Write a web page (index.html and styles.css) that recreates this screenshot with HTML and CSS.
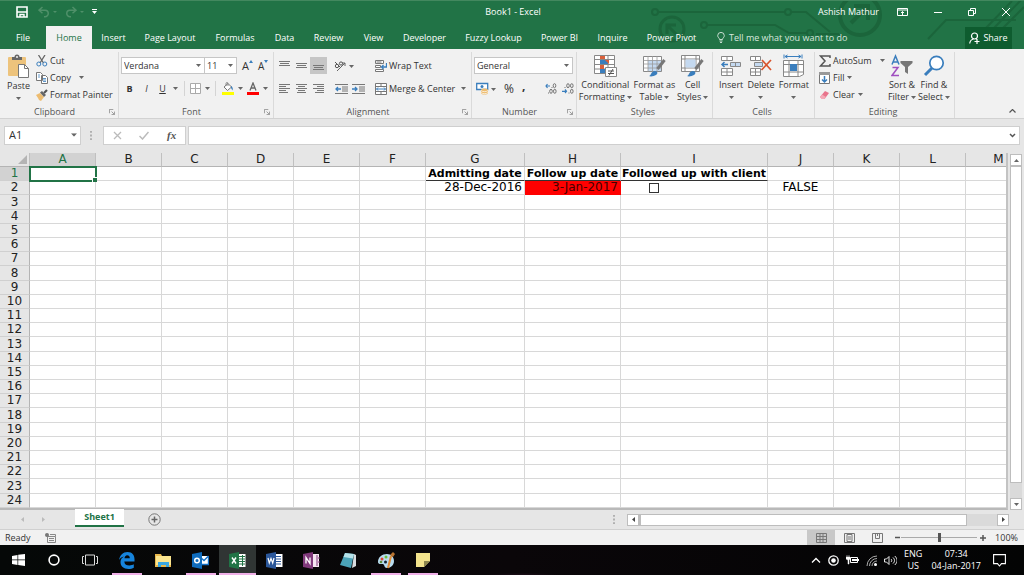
FILE: index.html
```html
<!DOCTYPE html>
<html lang="en">
<head>
<meta charset="utf-8">
<title>Book1 - Excel</title>
<link rel="stylesheet" href="styles.css">
</head>
<body>
<svg class="defs" aria-hidden="true">
  <symbol id="caret" viewBox="0 0 5 3"><path d="M0 0h5L2.5 3z" fill="#666"/></symbol>
  <symbol id="launch" viewBox="0 0 7 7"><path d="M.5 5V.5H5M3 3l3 3M6.5 3v3.5H3" fill="none" stroke="#777" stroke-width=".8"/></symbol>
  <symbol id="dots" viewBox="0 0 2 10"><path d="M0 0h2v2H0zM0 4h2v2H0zM0 8h2v2H0z" fill="#aaa"/></symbol>
</svg>

<header class="top">
  <svg class="circuit" width="380" height="49" viewBox="644 0 380 49" aria-hidden="true">
    <g fill="none" stroke="#1b653b" stroke-width="2">
      <circle cx="655" cy="11" r="3"/><path d="M658 11h127M791 11h15l24 20M707 24h68l14 8h18M816 33h22l6 5M928 38l18-19h70"/>
      <circle cx="788" cy="11" r="3"/><circle cx="704" cy="24" r="3"/><circle cx="810" cy="32" r="3"/>
      <circle cx="672" cy="28" r="12" stroke-width="3"/><path d="M667 33v-9h9M667 24l10 10" stroke-width="3"/>
      <circle cx="860" cy="14" r="20" stroke-width="4"/><path d="M851 22l15-15M854 5h14v14" stroke-width="4"/>
      <path d="M986 27l26-27M994 27l28-29M1003 27l21-21"/>
    </g>
  </svg>
  <div class="title">
    <div class="quick">
      <button aria-label="Save"><svg width="12" height="12" viewBox="0 0 12 12"><path d="M1 1h10v10H1z" fill="none" stroke="#fff" stroke-width="1.6"/><path d="M1 6h10M4 11V8.5h4V11" fill="none" stroke="#fff" stroke-width="1.4"/></svg></button>
      <button aria-label="Undo"><svg width="20" height="12" viewBox="0 0 20 12"><path d="M4.500 1L1 4.200l3.500 3M1.500 4.200H7a3.200 3.200 0 0 1 0 6.500H6" fill="none" stroke="#4f9069" stroke-width="1.500"/><path d="M15 5h4l-2 2z" fill="#4f9069"/></svg></button>
      <button aria-label="Redo"><svg width="20" height="12" viewBox="0 0 20 12"><path d="M7.500 1L11 4.200l-3.500 3M10.500 4.200H5a3.200 3.200 0 0 0 0 6.500h1" fill="none" stroke="#4f9069" stroke-width="1.500"/><path d="M15 5h4l-2 2z" fill="#4f9069"/></svg></button>
      <button aria-label="Customize toolbar"><svg width="5" height="6" viewBox="0 0 5 6"><path d="M0 0h5v1H0zM0 2h5L2.500 5z" fill="#fff"/></svg></button>
    </div>
    <h1>Book1 - Excel</h1>
    <div class="window">
      <span class="user">Ashish Mathur</span>
      <button aria-label="Ribbon display options"><svg width="11" height="8" viewBox="0 0 11 8"><path d="M.5.5h10v7H.5zM.5 2h10M5.500 7V3.500M4 5l1.500-1.500L7 5" fill="none" stroke="#fff"/></svg></button>
      <button aria-label="Minimize"><svg width="8" height="8" viewBox="0 0 8 8"><path d="M0 4.500h8" stroke="#fff"/></svg></button>
      <button aria-label="Restore"><svg width="8" height="8" viewBox="0 0 8 8"><path d="M.5 2.500h5v5h-5zM2.500 2V.5h5v5H6" fill="none" stroke="#fff"/></svg></button>
      <button aria-label="Close"><svg width="8" height="8" viewBox="0 0 8 8"><path d="M0 0l8 8M8 0L0 8" stroke="#fff"/></svg></button>
    </div>
  </div>
  <div class="tabrow">
    <nav class="tabs">
      <button>File</button><button class="active">Home</button><button>Insert</button><button>Page Layout</button><button>Formulas</button><button>Data</button><button>Review</button><button>View</button><button>Developer</button><button>Fuzzy Lookup</button><button>Power BI</button><button>Inquire</button><button>Power Pivot</button>
    </nav>
    <button class="tell"><svg width="8" height="11" viewBox="0 0 8 11"><path d="M2.500 7.500C2.500 6 .7 5.500.7 3.700a3.200 3.200 0 0 1 6.600 0C7.300 5.500 5.500 6 5.500 7.500zM2.500 9h3M3 10.500h2" fill="none" stroke="#d8e8df" stroke-width=".9"/></svg>Tell me what you want to do</button>
    <button class="share"><svg width="11" height="12" viewBox="0 0 11 12"><circle cx="5.500" cy="4" r="3" fill="none" stroke="#fff" stroke-width="1.200"/><path d="M.7 11.500C1 9 2.500 7.500 4.500 7M7 6.500l1 1M5.500 9.500h5M8 7v5" fill="none" stroke="#fff" stroke-width="1.200"/></svg>Share</button>
  </div>
</header>

<section class="ribbon" aria-label="Home ribbon">
  <div class="group clipboard">
    <div class="body">
      <button class="big"><svg width="23" height="25" viewBox="0 0 23 25"><rect x="1" y="3" width="18" height="19" rx="1" fill="#edc37c"/><path d="M5 6V3h2.500a2.500 2.500 0 0 1 5 0H15v3z" fill="#666"/><circle cx="10" cy="3" r="1" fill="#f1f1f1"/><path d="M11.500 10.500h6l4 4v9h-10z" fill="#fff" stroke="#777"/><path d="M17.500 10.500v4h4" fill="none" stroke="#777"/></svg>Paste<svg class="c" width="5" height="3"><use href="#caret"/></svg></button>
      <div class="stack">
        <button><svg width="12" height="12" viewBox="0 0 12 12"><path d="M2.500 0l5 8M9 0L4 8" stroke="#666" stroke-width="1.300"/><circle cx="2.800" cy="9" r="2" fill="none" stroke="#3a7ebd"/><circle cx="8.800" cy="9" r="2" fill="none" stroke="#3a7ebd"/></svg>Cut</button>
        <button><svg width="12" height="12" viewBox="0 0 12 12"><path d="M.5.500h4l2 2v6h-6zM5.500 3.500h4l2 2v6h-6z" fill="#fff" stroke="#777"/><path d="M2 3h2M2 5h2M7 6.500h3M7 8h3M7 9.500h3" stroke="#3a7ebd" stroke-width=".8"/></svg>Copy<svg class="c far" width="5" height="3"><use href="#caret"/></svg></button>
        <button><svg width="12" height="12" viewBox="0 0 12 12"><path d="M0 6l4-2 4 4-3 4-2-1-1-2z" fill="#edbc70"/><path d="M4 3.500L6 2l4 4-2 2z" fill="#666"/><path d="M8 4l3-3" stroke="#555" stroke-width="2.200"/></svg>Format Painter</button>
      </div>
    </div>
    <footer><span>Clipboard</span><svg width="6" height="6"><use href="#launch" width="6" height="6"/></svg></footer>
  </div>

  <div class="group font">
    <div class="rows">
      <div class="line">
        <label class="drop name"><select aria-label="Font"><option>Verdana</option></select><svg width="5" height="3"><use href="#caret"/></svg></label><label class="drop size"><select aria-label="Font size"><option>11</option></select><svg width="5" height="3"><use href="#caret"/></svg></label>
        <button class="grow"><b>A</b><svg width="4" height="3" viewBox="0 0 4 3"><path d="M0 3h4L2 0z" fill="#3a7ebd"/></svg></button>
        <button class="shrink"><b>A</b><svg width="4" height="3" viewBox="0 0 4 3"><path d="M0 0h4L2 3z" fill="#3a7ebd"/></svg></button>
      </div>
      <div class="line fmt">
        <button><b>B</b></button><button><i>I</i></button><button><u>U</u></button><button aria-label="Underline options"><svg width="5" height="3"><use href="#caret"/></svg></button>
        <span class="rule"></span>
        <button aria-label="Borders"><svg width="11" height="11" viewBox="0 0 11 11"><path d="M.5.500h10v10H.5zM5.500.500v10M.5 5.500h10" fill="#fff" stroke="#aaa"/></svg></button><button aria-label="Border options"><svg width="5" height="3"><use href="#caret"/></svg></button>
        <span class="rule"></span>
        <button aria-label="Fill color"><svg width="12" height="13" viewBox="0 0 12 13"><path d="M2 5l4-3.500L9.500 5 5.500 8.500z" fill="#fff" stroke="#777"/><path d="M4 4V1.500a1 1 0 0 1 2 0V4" fill="none" stroke="#777" stroke-width=".8"/><path d="M9 4c2 1 2 3 1.500 4.500L9 6z" fill="#3a7ebd"/><path d="M0 10h12v3H0z" fill="#ff0"/></svg></button><button aria-label="Fill options"><svg width="5" height="3"><use href="#caret"/></svg></button>
        <button aria-label="Font color"><svg width="12" height="13" viewBox="0 0 12 13"><path d="M3 8.500L6 1l3 7.500M4 6h4" fill="none" stroke="#666" stroke-width="1.300"/><path d="M0 10h12v3H0z" fill="#f00"/></svg></button><button aria-label="Font color options"><svg width="5" height="3"><use href="#caret"/></svg></button>
      </div>
    </div>
    <footer><span>Font</span><svg width="6" height="6"><use href="#launch" width="6" height="6"/></svg></footer>
  </div>

  <div class="group align">
    <div class="body">
      <div class="alignicons">
        <button aria-label="Top align"><svg width="11" height="11" viewBox="0 0 11 11"><path d="M0 1.500h11M1 3.500h9M0 5.500h11" stroke="#777"/></svg></button>
        <button aria-label="Middle align"><svg width="11" height="11" viewBox="0 0 11 11"><path d="M0 3.500h11M1 5.500h9M0 7.500h11" stroke="#777"/></svg></button>
        <button class="on" aria-label="Bottom align"><svg width="11" height="11" viewBox="0 0 11 11"><path d="M0 5.500h11M1 7.500h9M0 9.500h11" stroke="#777"/></svg></button>
        <button class="turn" aria-label="Orientation"><svg width="20" height="12" viewBox="0 0 20 12"><path d="M3 11l8-8M8 3h3v3" fill="none" stroke="#666"/><path d="M1 2l5 5" stroke="#555"/><circle cx="3" cy="6" r="1.700" fill="none" stroke="#555"/><circle cx="7" cy="3.500" r="1.600" fill="none" stroke="#555"/><path d="M15 5h5l-2.500 3z" fill="#666"/></svg></button>
        <button aria-label="Align left"><svg width="11" height="9" viewBox="0 0 11 9"><path d="M0 .500h11M0 2.500h7M0 4.500h11M0 6.500h7M0 8.500h9" stroke="#777"/></svg></button>
        <button aria-label="Center"><svg width="11" height="9" viewBox="0 0 11 9"><path d="M0 .500h11M2 2.500h7M0 4.500h11M2 6.500h7M1 8.500h9" stroke="#777"/></svg></button>
        <button aria-label="Align right"><svg width="11" height="9" viewBox="0 0 11 9"><path d="M0 .500h11M4 2.500h7M0 4.500h11M4 6.500h7M2 8.500h9" stroke="#777"/></svg></button>
        <span class="pair"><button aria-label="Decrease indent"><svg width="13" height="10" viewBox="0 0 13 10"><path d="M0 .500h13M7 3h6M7 5h6M7 7h6M0 9.500h13" stroke="#777"/><path d="M6 5H1M3 3L1 5l2 2" fill="none" stroke="#3a7ebd" stroke-width="1.300"/></svg></button>
        <button aria-label="Increase indent"><svg width="13" height="10" viewBox="0 0 13 10"><path d="M0 .500h13M7 3h6M7 5h6M7 7h6M0 9.500h13" stroke="#777"/><path d="M0 5h5M3 3l2 2-2 2" fill="none" stroke="#3a7ebd" stroke-width="1.300"/></svg></button></span>
      </div>
      <div class="alignwords">
        <button><svg width="12" height="12" viewBox="0 0 12 12"><path d="M.5.500h8v3h-8z" fill="#fff" stroke="#777"/><path d="M.5 5.500h5v2h-5zM.5 9.500h8v2h-8z" fill="#fff" stroke="#777"/><path d="M1.500 2h5" stroke="#777"/><path d="M11.500 3v4H6.500M8.500 5l-2 2 2 2" fill="none" stroke="#3a7ebd" stroke-width="1.300"/></svg>Wrap Text</button>
        <button><svg width="12" height="12" viewBox="0 0 12 12"><path d="M.5.500h11v11H.5zM.5 3.500h11M.5 8.500h11M6 0v3.500M6 8.500V12" fill="#fff" stroke="#777"/><path d="M1.500 6h9M3 4.500L1.500 6 3 7.500M9 4.500L10.500 6 9 7.500" fill="none" stroke="#3a7ebd"/></svg>Merge &amp; Center<svg class="c far" width="5" height="3"><use href="#caret"/></svg></button>
      </div>
    </div>
    <footer><span>Alignment</span><svg width="6" height="6"><use href="#launch" width="6" height="6"/></svg></footer>
  </div>

  <div class="group number">
    <div class="rows">
      <div class="line"><label class="drop wide"><select aria-label="Number format"><option>General</option></select><svg width="5" height="3"><use href="#caret"/></svg></label></div>
      <div class="line nums">
        <button aria-label="Accounting format"><svg width="20" height="13" viewBox="0 0 20 13"><path d="M.7 1.500h11v6H.7z" fill="#fff" stroke="#3a7ebd" stroke-width="1.300"/><circle cx="6" cy="4.500" r="1.500" fill="#3a7ebd"/><path d="M5 8c0-2 7-2 7 0v3c0 2-7 2-7 0z" fill="#edbc70"/><path d="M5 8.500c1 1.500 6 1.500 7 0M5 10.500c1 1.500 6 1.500 7 0" fill="none" stroke="#fff" stroke-width=".7"/><path d="M15 6h5l-2.500 3z" fill="#666"/></svg></button>
        <button class="pct">%</button><button class="pct comma"><b>,</b></button>
        <span class="rule"></span>
        <button class="dec" aria-label="Increase decimal"><svg width="12" height="11" viewBox="0 0 12 11"><path d="M5 3H1M2.500 1L1 3l1.500 2" fill="none" stroke="#3a7ebd" stroke-width="1.200"/><g fill="none" stroke="#666" stroke-width=".9"><ellipse cx="9.500" cy="2.700" rx="1.300" ry="2"/><ellipse cx="6" cy="8.300" rx="1.300" ry="2"/><ellipse cx="9.800" cy="8.300" rx="1.300" ry="2"/><path d="M6.500 4.500h1M3 10h1"/></g></svg></button>
        <button class="dec" aria-label="Decrease decimal"><svg width="12" height="11" viewBox="0 0 12 11"><path d="M0 8.300h4.500M3 6.500l1.500 1.800L3 10" fill="none" stroke="#3a7ebd" stroke-width="1.200"/><g fill="none" stroke="#666" stroke-width=".9"><ellipse cx="6" cy="2.700" rx="1.300" ry="2"/><ellipse cx="9.800" cy="2.700" rx="1.300" ry="2"/><ellipse cx="9.800" cy="8.300" rx="1.300" ry="2"/><path d="M2.500 4.500h1M6.500 10h1"/></g></svg></button>
      </div>
    </div>
    <footer><span>Number</span><svg width="6" height="6"><use href="#launch" width="6" height="6"/></svg></footer>
  </div>

  <div class="group styles">
    <div class="body">
      <button class="big"><svg width="23" height="24" viewBox="0 0 23 24"><path d="M.5 1.500h20v18H.5zM.5 5.500h20M.5 10.500h20M.5 15h20M7 1v19M14 1v19" fill="#fff" stroke="#888"/><path d="M6 2h5v3H6zM6 11h4v4H6z" fill="#d9603b"/><path d="M6 6h8v4H6zM6 15h6v4H6z" fill="#3a7ebd"/><path d="M11 6h4v4" fill="#d9603b"/><path d="M11.500 13.500h11v9h-11z" fill="#fff" stroke="#888"/><path d="M14 17h6M14 19.500h6M19 15l-4 6.500" stroke="#555"/></svg>Conditional<span>Formatting<svg class="c" width="5" height="3"><use href="#caret"/></svg></span></button>
      <button class="big"><svg width="23" height="24" viewBox="0 0 23 24"><path d="M.5 2.500h18v15H.5z" fill="#fff" stroke="#888"/><path d="M5 6h13v11H5z" fill="#c4d9f0"/><path d="M.5 6.500h18M.5 10h18M.5 14h18M5 2v16M9.500 2v16M14 2v16" fill="none" stroke="#999" stroke-width=".8"/><path d="M21.500 6l-7 9" stroke="#777" stroke-width="3"/><path d="M6 22c2 0 2-5 6-5 3 0 3 3 1 4s-5 2-7 1z" fill="#3a7ebd"/></svg>Format as<span>Table<svg class="c" width="5" height="3"><use href="#caret"/></svg></span></button>
      <button class="big"><svg width="23" height="24" viewBox="0 0 23 24"><path d="M.5 1.500h18v16H.5zM.5 5h18M.5 14h18M4 1v17M15 1v17" fill="#fff" stroke="#888"/><path d="M4.500 5.500h10v8h-10z" fill="#c4d9f0"/><path d="M21.500 6l-7 9" stroke="#777" stroke-width="3"/><path d="M6 22c2 0 2-5 6-5 3 0 3 3 1 4s-5 2-7 1z" fill="#3a7ebd"/></svg>Cell<span>Styles<svg class="c" width="5" height="3"><use href="#caret"/></svg></span></button>
    </div>
    <footer><span>Styles</span></footer>
  </div>

  <div class="group cells">
    <div class="body">
      <button class="big"><svg width="22" height="24" viewBox="0 0 22 24"><path d="M1.500 2.500h11v4h-11zM7 2.500v4M1.500 14.500h11v7h-11zM7 14.500v7M1.500 18h11" fill="#fff" stroke="#888"/><path d="M10.500 8.500h10v4h-10z" fill="#c4d9f0" stroke="#888"/><path d="M15.500 8.500v4" stroke="#888"/><path d="M8 10.500H2M4.500 8L2 10.500 4.500 13" fill="none" stroke="#3a7ebd" stroke-width="1.500"/></svg>Insert<svg class="c" width="5" height="3"><use href="#caret"/></svg></button>
      <button class="big"><svg width="22" height="24" viewBox="0 0 22 24"><path d="M.5 2.500h10v4H.5zM5.500 2.500v4M.5 14.500h10v7H.5zM5.500 14.500v7M.5 18h10" fill="#fff" stroke="#888"/><path d="M4.500 8.500h8v4h-8z" fill="#c4d9f0" stroke="#888"/><path d="M12 6l9 10M21 6L11.500 16" stroke="#d9532c" stroke-width="1.700"/></svg>Delete<svg class="c" width="5" height="3"><use href="#caret"/></svg></button>
      <button class="big"><svg width="22" height="24" viewBox="0 0 22 24"><path d="M1 .500v4M19 .500v4M2 2.500h16M4.500 1L2 2.500 4.500 4M15.500 1L18 2.500 15.500 4" fill="none" stroke="#3a7ebd"/><path d="M.5 6.500h20v14l-4 2H.5zM.5 10.500h20M.5 18h20M6 6v16M15 6v16" fill="#fff" stroke="#888"/><path d="M7 10h7v7H7z" fill="#3a7ebd"/></svg>Format<svg class="c" width="5" height="3"><use href="#caret"/></svg></button>
    </div>
    <footer><span>Cells</span></footer>
  </div>

  <div class="group edit">
    <div class="body">
      <div class="stack">
        <button><svg width="12" height="12" viewBox="0 0 12 12"><path d="M11 3V1H1.500L6 6l-4.500 5H11V9" fill="none" stroke="#555" stroke-width="1.500"/></svg>AutoSum<svg class="c far" width="5" height="3"><use href="#caret"/></svg></button>
        <button><svg width="12" height="12" viewBox="0 0 12 12"><path d="M.5.500h10v11H.5z" fill="#fff" stroke="#777"/><path d="M0 0h11v3H0z" fill="#999"/><path d="M5.500 4v6M3 7.500L5.500 10 8 7.500" fill="none" stroke="#3a7ebd" stroke-width="1.500"/></svg>Fill<svg class="c" width="5" height="3"><use href="#caret"/></svg></button>
        <button><svg width="12" height="12" viewBox="0 0 12 12"><path d="M1 8l5-6 4 2-4.500 6H3z" fill="#e8748c"/><path d="M1 8l2-2.500L7 8l-1.500 2H3z" fill="#f4a9b7"/></svg>Clear<svg class="c" width="5" height="3"><use href="#caret"/></svg></button>
      </div>
      <button class="big"><svg width="22" height="24" viewBox="0 0 22 24"><path d="M1 10.500L4.500 2 8 10.500M2.500 8h4" fill="none" stroke="#3a7ebd" stroke-width="1.500"/><path d="M1.500 13.500h5.500l-6 8h7" fill="none" stroke="#a04fc0" stroke-width="1.500"/><path d="M9.500 7h12v2L17 13v7l-3-2v-5L9.500 9z" fill="#777"/></svg>Sort &amp;<span>Filter<svg class="c" width="5" height="3"><use href="#caret"/></svg></span></button>
      <button class="big"><svg width="22" height="24" viewBox="0 0 22 24"><circle cx="13.500" cy="9" r="6.700" fill="#fff" stroke="#3a7ebd" stroke-width="1.700"/><path d="M9 14l-7 7" stroke="#3a7ebd" stroke-width="3"/></svg>Find &amp;<span>Select<svg class="c" width="5" height="3"><use href="#caret"/></svg></span></button>
    </div>
    <footer><span>Editing</span></footer>
  </div>
  <button class="collapse" aria-label="Collapse ribbon"><svg width="7" height="4" viewBox="0 0 7 4"><path d="M.5 3.500l3-3 3 3" fill="none" stroke="#555" stroke-width="1.200"/></svg></button>
</section>

<section class="formula">
  <label class="drop cellname"><input aria-label="Name box" value="A1"><svg width="6" height="4" viewBox="0 0 5 3"><use href="#caret"/></svg></label>
  <svg class="grip" width="2" height="9" viewBox="0 0 2 10"><use href="#dots"/></svg>
  <div class="fx">
    <button aria-label="Cancel"><svg width="9" height="9" viewBox="0 0 9 9"><path d="M1 1l7 7M8 1L1 8" stroke="#bbb" stroke-width="1.300"/></svg></button>
    <button aria-label="Enter"><svg width="10" height="9" viewBox="0 0 10 9"><path d="M.5 5L3.500 8l6-7" fill="none" stroke="#bbb" stroke-width="1.500"/></svg></button>
    <button class="fn"><i>fx</i></button>
  </div>
  <label class="drop bar"><input aria-label="Formula bar"><svg width="7" height="5" viewBox="0 0 7 5"><path d="M1 1l2.500 2.500L6 1" fill="none" stroke="#555" stroke-width="1.500"/></svg></label>
</section>

<main class="work">
  <div class="sheet">
    <table>
      <colgroup><col class="w-head"><col span="6" class="w-std"><col class="w-g"><col class="w-h"><col class="w-i"><col span="4" class="w-std"></colgroup>
      <thead><tr><th class="corner"><svg width="9" height="9" viewBox="0 0 9 9"><path d="M9 0v9H0z" fill="#b4b4b4"/></svg></th><th class="sel">A</th><th>B</th><th>C</th><th>D</th><th>E</th><th>F</th><th>G</th><th>H</th><th>I</th><th>J</th><th>K</th><th>L</th><th>M</th></tr></thead>
      <tbody>
        <tr><th class="sel">1<td class="cursor"><td><td><td><td><td><td class="cap">Admitting date<td class="cap">Follow up date<td class="cap">Followed up with client<td><td><td><td>
        <tr><th>2<td><td><td><td><td><td><td class="date">28-Dec-2016<td class="date due">3-Jan-2017<td class="tick"><input type="checkbox" aria-label="Followed up with client"><td class="mid">FALSE<td><td><td>
        <tr><th>3<td><td><td><td><td><td><td><td><td><td><td><td><td>
        <tr><th>4<td><td><td><td><td><td><td><td><td><td><td><td><td>
        <tr><th>5<td><td><td><td><td><td><td><td><td><td><td><td><td>
        <tr><th>6<td><td><td><td><td><td><td><td><td><td><td><td><td>
        <tr><th>7<td><td><td><td><td><td><td><td><td><td><td><td><td>
        <tr><th>8<td><td><td><td><td><td><td><td><td><td><td><td><td>
        <tr><th>9<td><td><td><td><td><td><td><td><td><td><td><td><td>
        <tr><th>10<td><td><td><td><td><td><td><td><td><td><td><td><td>
        <tr><th>11<td><td><td><td><td><td><td><td><td><td><td><td><td>
        <tr><th>12<td><td><td><td><td><td><td><td><td><td><td><td><td>
        <tr><th>13<td><td><td><td><td><td><td><td><td><td><td><td><td>
        <tr><th>14<td><td><td><td><td><td><td><td><td><td><td><td><td>
        <tr><th>15<td><td><td><td><td><td><td><td><td><td><td><td><td>
        <tr><th>16<td><td><td><td><td><td><td><td><td><td><td><td><td>
        <tr><th>17<td><td><td><td><td><td><td><td><td><td><td><td><td>
        <tr><th>18<td><td><td><td><td><td><td><td><td><td><td><td><td>
        <tr><th>19<td><td><td><td><td><td><td><td><td><td><td><td><td>
        <tr><th>20<td><td><td><td><td><td><td><td><td><td><td><td><td>
        <tr><th>21<td><td><td><td><td><td><td><td><td><td><td><td><td>
        <tr><th>22<td><td><td><td><td><td><td><td><td><td><td><td><td>
        <tr><th>23<td><td><td><td><td><td><td><td><td><td><td><td><td>
        <tr><th>24<td><td><td><td><td><td><td><td><td><td><td><td><td>
      </tbody>
    </table>
  </div>
  <div class="vscroll">
    <button aria-label="Scroll up"><svg width="5" height="3" viewBox="0 0 5 3"><path d="M0 3h5L2.500 0z" fill="#666"/></svg></button>
    <div class="thumb"></div><div class="track"></div>
    <button aria-label="Scroll down"><svg width="5" height="3"><use href="#caret"/></svg></button>
  </div>
</main>

<section class="sheets">
  <button class="step" aria-label="Previous sheet"><svg width="3" height="5" viewBox="0 0 3 5"><path d="M3 0v5L0 2.500z" fill="#bbb"/></svg></button>
  <button class="step" aria-label="Next sheet"><svg width="3" height="5" viewBox="0 0 3 5"><path d="M0 0v5l3-2.500z" fill="#bbb"/></svg></button>
  <button class="sheettab">Sheet1</button>
  <button class="add" aria-label="New sheet"><svg width="13" height="13" viewBox="0 0 13 13"><circle cx="6.500" cy="6.500" r="5.700" fill="none" stroke="#777"/><path d="M6.500 3.500v6M3.500 6.500h6" stroke="#666" stroke-width="1.500"/></svg></button>
  <svg class="grip" width="2" height="9" viewBox="0 0 2 10"><use href="#dots"/></svg>
  <div class="hscroll">
    <button aria-label="Scroll left"><svg width="3" height="5" viewBox="0 0 3 5"><path d="M3 0v5L0 2.500z" fill="#444"/></svg></button>
    <div class="thumb"></div><div class="track"></div>
    <button aria-label="Scroll right"><svg width="3" height="5" viewBox="0 0 3 5"><path d="M0 0v5l3-2.500z" fill="#444"/></svg></button>
  </div>
</section>

<section class="status">
  <span>Ready</span>
  <svg class="macro" width="11" height="10" viewBox="0 0 11 10"><path d="M2.500 3.500h8v6h-8zM5 1.500h5.500v2M4 5.500h5M4 7.500h5" fill="none" stroke="#888"/><circle cx="2" cy="2" r="2" fill="#777"/></svg>
  <button class="view on" aria-label="Normal view"><svg width="11" height="10" viewBox="0 0 11 10"><path d="M.5.500h10v9H.5zM.5 3.500h10M.5 6.500h10M4 0v10M7 0v10" fill="none" stroke="#777"/></svg></button>
  <button class="view" aria-label="Page layout view"><svg width="11" height="10" viewBox="0 0 11 10"><path d="M.5.500h10v9H.5zM3 1.500h5v7H3zM4 4h3M4 6h3" fill="none" stroke="#777"/></svg></button>
  <button class="view" aria-label="Page break view"><svg width="11" height="10" viewBox="0 0 11 10"><path d="M.5.500h10v9H.5zM3.500 0v5.500h4V0M5.500 0v3" fill="none" stroke="#777"/></svg></button>
  <button class="zoom" aria-label="Zoom out"><svg width="5" height="5" viewBox="0 0 5 5"><path d="M0 2.500h5" stroke="#555" stroke-width="1.500"/></svg></button>
  <input type="range" aria-label="Zoom" min="0" max="100" value="50">
  <button class="zoom" aria-label="Zoom in"><svg width="6" height="6" viewBox="0 0 6 6"><path d="M0 3h6M3 0v6" stroke="#555" stroke-width="1.500"/></svg></button>
  <span class="percent">100%</span>
</section>

<footer class="taskbar">
  <div class="apps">
    <button aria-label="Start"><svg width="13" height="12" viewBox="0 0 13 12"><path d="M0 2l5.500-1v4.600H0zM6.200.8L13 0v5.600H6.200zM0 6.300h5.500V11L0 10zM6.200 6.300H13V12l-6.800-.9z" fill="#fff"/></svg></button>
    <button aria-label="Cortana"><svg width="12" height="12" viewBox="0 0 12 12"><circle cx="6" cy="6" r="4.900" fill="none" stroke="#fff" stroke-width="1.600"/></svg></button>
    <button aria-label="Task view"><svg width="16" height="12" viewBox="0 0 16 12"><path d="M3.500 1h9v10h-9zM2 2.500H.5v7H2M14 2.500h1.500v7H14" fill="none" stroke="#ddd"/></svg></button>
    <button class="run" aria-label="Edge"><svg width="16" height="17" viewBox="0 0 16 17"><path d="M0 8C1 3 4 0 8.500 0c5 0 7 3.500 7 7v2.500H5.300c.2 3 2.400 4 5 4 2 0 3.500-.5 4.500-1.200v3.400C13.500 16.500 11.500 17 9.500 17 4.500 17 1.300 14 1.500 9.800 1.700 7.500 3 5.600 5 4.600 2.600 5 1 6.300 0 8zm5.500-1.700h5.300c0-2-1-3.100-2.600-3.100S5.700 4.500 5.500 6.300z" fill="#1684dc"/></svg></button>
    <button aria-label="File Explorer"><svg width="17" height="15" viewBox="0 0 17 15"><path d="M0 1h6l1 2h9v11H0z" fill="#e8b84c"/><path d="M1 3h15v9H1z" fill="#fbe58f"/><path d="M3 9h11v5h-3v-2H6v2H3z" fill="#3aa7e0"/></svg></button>
    <button class="run" aria-label="Outlook"><svg width="17" height="17" viewBox="0 0 17 17"><path d="M8 4h8.500v9H8z" fill="#fff"/><path d="M8 5l4 3.500L16.500 4M8 12.500h8.500V4" fill="none" stroke="#1670c4" stroke-width="1.400"/><path d="M0 2l10-2v17L0 15z" fill="#0f6cbd"/><circle cx="5" cy="8.500" r="2.300" fill="none" stroke="#fff" stroke-width="1.500"/></svg></button>
    <button class="run now" aria-label="Excel"><svg width="17" height="17" viewBox="0 0 17 17"><path d="M8 2h8.500v13H8z" fill="#fff"/><path d="M10 4.500h6M10 7h6M10 9.500h6M10 12h6M13.500 3v11" stroke="#217346"/><path d="M0 2l10-2v17L0 15z" fill="#217346"/><path d="M3 5.500l4 6M7 5.500l-4 6" stroke="#fff" stroke-width="1.400"/></svg></button>
    <button aria-label="Word"><svg width="17" height="17" viewBox="0 0 17 17"><path d="M8 2h8.500v13H8z" fill="#fff"/><path d="M10 4.500h5M10 7h5M10 9.500h5M10 12h5" stroke="#2b579a"/><path d="M0 2l10-2v17L0 15z" fill="#2b579a"/><path d="M2 6l1.300 5L5 6.500 6.700 11 8 6" fill="none" stroke="#fff" stroke-width="1.200"/></svg></button>
    <button aria-label="OneNote"><svg width="17" height="17" viewBox="0 0 17 17"><path d="M8 2h8v13H8z" fill="#f6e6f2"/><path d="M14 3v11M16 5v2M16 9v2" stroke="#80397b"/><path d="M0 2l10-2v17L0 15z" fill="#80397b"/><path d="M3 11.500v-6l4 6v-6" fill="none" stroke="#fff" stroke-width="1.300"/></svg></button>
    <button aria-label="Notepad"><svg width="17" height="17" viewBox="0 0 17 17"><path d="M14 2l2 1v11l-4 2z" fill="#d8dde0"/><path d="M5 1l9 1-3 14-11-3z" fill="#4ba3b8"/><path d="M5 1l9 1-1 4.500-9.500-1.500z" fill="#b5e2ea"/></svg></button>
    <button class="run" aria-label="Paint"><svg width="18" height="17" viewBox="0 0 18 17"><path d="M1 10C1 5 5 2 10 2c4 0 7 3 7 7s-3 7-7 7c-3 0-2-3-4-4-1-.5-5 1-5-2z" fill="#b9dcf0"/><circle cx="5" cy="7" r="1.500" fill="#e0422f"/><circle cx="9" cy="5" r="1.500" fill="#6bbf3b"/><circle cx="4" cy="10" r="1.300" fill="#5b8e3e"/><circle cx="8.500" cy="10" r="1.500" fill="#123"/><path d="M11 16l3-12" stroke="#dd8a35" stroke-width="2"/><path d="M13 3l3-3 2 2-2 3z" fill="#ba7430"/></svg></button>
    <button class="run" aria-label="Sticky Notes"><svg width="14" height="14" viewBox="0 0 14 14"><path d="M0 0h14v8l-6 6H0z" fill="#f2e38c"/><path d="M8 14V8h6z" fill="#8c854d"/></svg></button>
  </div>
  <div class="tray">
    <svg width="10" height="6" viewBox="0 0 10 6"><path d="M1 5.500l4-4 4 4" fill="none" stroke="#fff" stroke-width="1.300"/></svg>
    <svg width="11" height="11" viewBox="0 0 11 11"><circle cx="5.500" cy="5.500" r="4.700" fill="none" stroke="#fff" stroke-width="1.300"/><circle cx="5.500" cy="5.500" r="2.300" fill="#fff"/></svg>
    <svg width="13" height="10" viewBox="0 0 13 10"><path d="M4.500 2.500h7v5h-7z" fill="none" stroke="#fff"/><path d="M6 4h5v2H6zM12 4h1v2h-1z" fill="#fff"/><path d="M0 2h4v2L3 5v4H2V5L0 4zM1 0v2M3 0v2" fill="#fff" stroke="#fff" stroke-width=".5"/></svg>
    <svg width="11" height="11" viewBox="0 0 11 11"><g fill="none" stroke="#aaa"><path d="M1 11A10 10 0 0 1 11 1M3.500 11A7.500 7.500 0 0 1 11 3.500M6 11a5 5 0 0 1 5-5"/></g><circle cx="9.500" cy="9.500" r="1.500" fill="#fff"/></svg>
    <svg width="13" height="11" viewBox="0 0 13 11"><path d="M.5 4h2L5 1.500v8L2.500 7h-2zM7 4c1 1 1 2 0 3M9 2.500c2 2 2 4 0 6M10.800 1c3 3 3 6 0 9" fill="none" stroke="#fff" stroke-width=".9"/></svg>
    <p>ENG<br>US</p>
    <p class="clock">07:34<br>04-Jan-2017</p>
    <svg class="note" width="13" height="13" viewBox="0 0 13 13"><path d="M.6.600h11.800v9H8.500L6.500 12l-2-2.400H.6z" fill="none" stroke="#fff" stroke-width="1.100"/></svg>
  </div>
</footer>
</body>
</html>
```

FILE: styles.css
```css
* { box-sizing: border-box; }
body {
  margin: 0;
  min-height: 100vh;
  display: flex;
  flex-direction: column;
  background: #e6e6e6;
  color: #333;
  font: 9px/12px "Open Sans", "Noto Sans", sans-serif;
}
button {
  padding: 0;
  border: 0;
  background: none;
  color: inherit;
  font: inherit;
  display: flex;
  align-items: center;
  justify-content: center;
  white-space: nowrap;
}
svg { display: block; flex: none; }
.defs { position: absolute; width: 0; height: 0; }
input, select { font: inherit; color: inherit; margin: 0; }

/* Title bar and tabs */
.top { position: relative; background: #217346; color: #fff; border-top: 1px solid #43885f; }
.circuit { position: absolute; right: 0; top: 0; }
.title, .tabrow { position: relative; display: flex; }
.title { height: 25px; padding-bottom: 3px; align-items: center; }
.quick, .window { flex: 1; display: flex; align-items: center; }
.quick { padding-left: 16px; gap: 7px; }
.quick button:first-child { margin-right: 3px; }
.title h1 { margin: 0; font-size: 9px; font-weight: 400; }
.window { justify-content: flex-end; padding-right: 14px; gap: 26px; }
.window .user { margin-right: -8px; }
.tabrow { height: 23px; }
.tabs {
  display: grid;
  grid-template-columns: 46px 46px 43px 70px 60px 39px 49px 41px 61px 77px 55px 51px 67px;
}
.tabs .active { background: #f1f1f1; color: #217346; }
.tell { margin-left: 12px; gap: 4px; color: #d8e8df; }
.share { margin: 1px 12px 0 auto; width: 47px; gap: 3px; background: #0e5c2f; }

/* Ribbon */
.ribbon { display: flex; height: 70px; background: #f1f1f1; border-bottom: 1px solid #d2d2d2; }
.group { display: flex; flex-direction: column; margin: 3px 0 0; border-right: 1px solid #dadada; }
.clipboard { width: 119px; }
.font { width: 155px; }
.align { width: 198px; }
.number { width: 105px; }
.styles { width: 136px; }
.cells { width: 102px; }
.edit { width: 140px; }
.body { display: flex; flex: 1; }
.group footer { display: flex; align-items: center; height: 12px; padding-right: 3px; color: #555; }
.group footer span { flex: 1; text-align: center; }
.big { flex-direction: column; justify-content: flex-start; padding-top: 2px; }
.big > svg:first-child { margin-bottom: 1px; }
.big span { display: flex; align-items: center; gap: 2px; }
.big > .c { margin-top: 5px; }
.clipboard .body { padding-left: 7px; gap: 6px; }
.stack { display: flex; flex-direction: column; }
.stack button { height: 17px; justify-content: flex-start; gap: 2px; }
.stack .c { margin-left: 1px; }
.stack .c.far { margin-left: 6px; }

.rows { flex: 1; padding: 2px 0 0 2px; }
.line { display: flex; align-items: center; height: 23px; }
.drop { display: grid; align-items: center; background: #fff; border: 1px solid #c6c6c6; }
.drop > * { grid-area: 1 / 1; }
.drop > svg { justify-self: end; margin-right: 3px; pointer-events: none; }
.drop select, .drop input { appearance: none; width: 100%; min-width: 0; padding: 0 2px; border: 0; background: none; outline: 0; }
.line .drop { height: 17px; }
.name { width: 84px; }
.size { width: 33px; margin-left: -1px; }
.wide { width: 99px; }
.grow, .shrink { align-items: flex-start; }
.grow { margin-left: 5px; font-size: 11px; }
.shrink { margin-left: 5px; font-size: 10px; }
.grow b, .shrink b { font-weight: 400; }
.fmt {
  display: grid;
  grid-template-columns: 17px 17px 15px 10px 8px 15px 8px 8px 18px 6px 19px 6px;
  justify-items: center;
}
.rule { width: 1px; height: 15px; background: #d4d4d4; }

.align .body { padding: 2px 0 0 2px; }
.alignicons {
  display: grid;
  grid-template-columns: 17px 17px 17px 45px;
  grid-template-rows: 23px 23px;
  align-items: center;
}
.alignicons > button { height: 17px; }
.alignicons .on { background: #c6c6c6; }
.alignicons .turn { justify-content: flex-start; padding-left: 7px; }
.pair { display: flex; gap: 4px; justify-content: center; }
.alignwords { padding-left: 3px; }
.alignwords button { height: 23px; gap: 2px; }
.alignwords .far { margin-left: 4px; }
.nums { gap: 8px; padding: 0 2px; }
.pct { font-size: 12px; }
.comma { padding-bottom: 5px; }
.nums .rule { margin-left: 4px; }
.dec + .dec { margin-left: -3px; }
.styles .big { flex: 1 1 auto; }
.styles .body { padding: 0 3px 0 1px; }
.cells .body { padding: 0 3px 0 4px; justify-content: space-around; }
.edit .body { padding-left: 4px; }
.edit .stack { width: 67px; }
.edit .big { width: 32px; }
.collapse { margin: auto 8px 5px auto; }

/* Formula bar */
.formula { display: flex; align-items: center; height: 34px; padding: 0 4px 2px; }
.formula .drop, .fx { height: 19px; border: 1px solid #cfcfcf; background: #fff; }
.cellname { width: 77px; font-size: 11px; }
.formula .cellname input { padding-left: 4px; }
.formula .grip { margin: 0 11px 0 9px; }
.fx { width: 83px; display: flex; justify-content: space-around; align-items: center; margin-right: 2px; }
.fn { font: bold 11px/13px "Liberation Serif", serif; color: #555; }
.bar { flex: 1; }

/* Grid */
.work { flex: 1; display: flex; }
.sheet { flex: 1; min-width: 0; overflow: hidden; border-right: 2px solid #c3c3c3; border-bottom: 2px solid #b9b9b9; }
table {
  table-layout: fixed;
  width: 1032px;
  height: 355px;
  border-spacing: 0;
  background: #fff;
  color: #000;
  font: 12px/13px "DejaVu Sans", sans-serif;
}
.w-head { width: 30px; }
.w-std { width: 66px; }
.w-g { width: 99px; }
.w-h { width: 96px; }
.w-i { width: 147px; }
td, th { padding: 0; white-space: nowrap; overflow: hidden; }
td { border-right: 1px solid #d8d8d8; border-bottom: 1px solid #d8d8d8; }
th { background: #e6e6e6; font-weight: 400; text-align: center; color: #222; }
thead th { height: 14px; border-right: 1px solid #c0c0c0; border-bottom: 1px solid #b4b4b4; }
tbody th { border-right: 1px solid #b4b4b4; border-bottom: 1px solid #d0d0d0; }
th.sel { background: #d2d2d2; color: #217346; }
.corner svg { margin: 0 2px 0 auto; }
.cursor { outline: 2px solid #217346; outline-offset: -1px; position: relative; overflow: visible; }
.cursor::after {
  content: "";
  position: absolute;
  right: -2px;
  bottom: -2px;
  width: 4px;
  height: 4px;
  background: #217346;
  border: solid #fff;
  border-width: 1px 0 0 1px;
  box-sizing: content-box;
}
.cap { font-size: 11px; font-weight: 700; text-align: center; border-bottom-color: #333; }
.date { text-align: right; padding-right: 2px; }
.due { background: #f00; color: #400; border-color: #f00; }
.mid { text-align: center; }
.tick { padding-left: 28px; }
.tick input { display: block; appearance: none; width: 10px; height: 10px; border: 1px solid #333; background: #fff; }

.vscroll { width: 14px; margin: 1px 2px 0 0; padding-left: 2px; display: flex; flex-direction: column; }
.vscroll button, .hscroll button, .thumb { background: #fff; border: 1px solid #bdbdbd; }
.vscroll button { height: 12px; }
.track { background: #dadada; }
.vscroll .thumb { flex: 21; }
.vscroll .track { flex: 1; }

/* Sheet tabs */
.sheets { display: flex; align-items: center; height: 20px; border-bottom: 1px solid #d0d0d0; }
.step { width: 21px; }
.step:first-child { margin-left: 12px; }
.sheettab {
  align-self: flex-start;
  width: 49px;
  height: 18px;
  margin: -1px 24px 0 21px;
  background: #fff;
  border-bottom: 2px solid #217346;
  color: #217346;
  font-weight: 700;
}
.sheets .grip { margin-left: auto; }
.hscroll { display: flex; flex: 0 1 382px; height: 12px; margin: 0 15px 0 12px; }
.hscroll button { width: 12px; }
.hscroll .thumb { flex: 11; border-left-width: 2px; }
.hscroll .track { flex: 1; }

/* Status bar */
.status { display: flex; align-items: center; height: 15px; padding-left: 5px; background: #f1f1f1; }
.macro { margin: 0 auto 0 14px; }
.view { width: 28px; height: 15px; }
.view.on { background: #c8c8c8; }
.zoom { width: 8px; margin-left: 2px; }
.status input { appearance: none; width: 76px; height: 10px; background: linear-gradient(#aaa, #aaa) center / 100% 1px no-repeat; }
.status input::-webkit-slider-thumb { appearance: none; width: 3px; height: 9px; background: #555; }
.percent { margin: 0 6px 0 8px; }

/* Taskbar */
.taskbar {
  display: flex;
  height: 30px;
  background: radial-gradient(ellipse at 51% 100%, #1c0d18 0, transparent 5%), linear-gradient(90deg, #050807, #0a0609 50%, #030404);
  color: #fff;
}
.apps { display: grid; grid-template-columns: 36px 36px 36px repeat(9, 37px); }
.apps .run { background: linear-gradient(#f0b0e8, #f0b0e8) center bottom / 30px 2px no-repeat; }
.apps .now { background-color: #303534; background-size: 100% 2px; }
.tray { display: flex; align-items: center; gap: 7px; margin-left: auto; padding-right: 18px; }
.tray p { margin: 0; text-align: center; }
.tray .clock { margin: 0 5px 0 2px; }
```
